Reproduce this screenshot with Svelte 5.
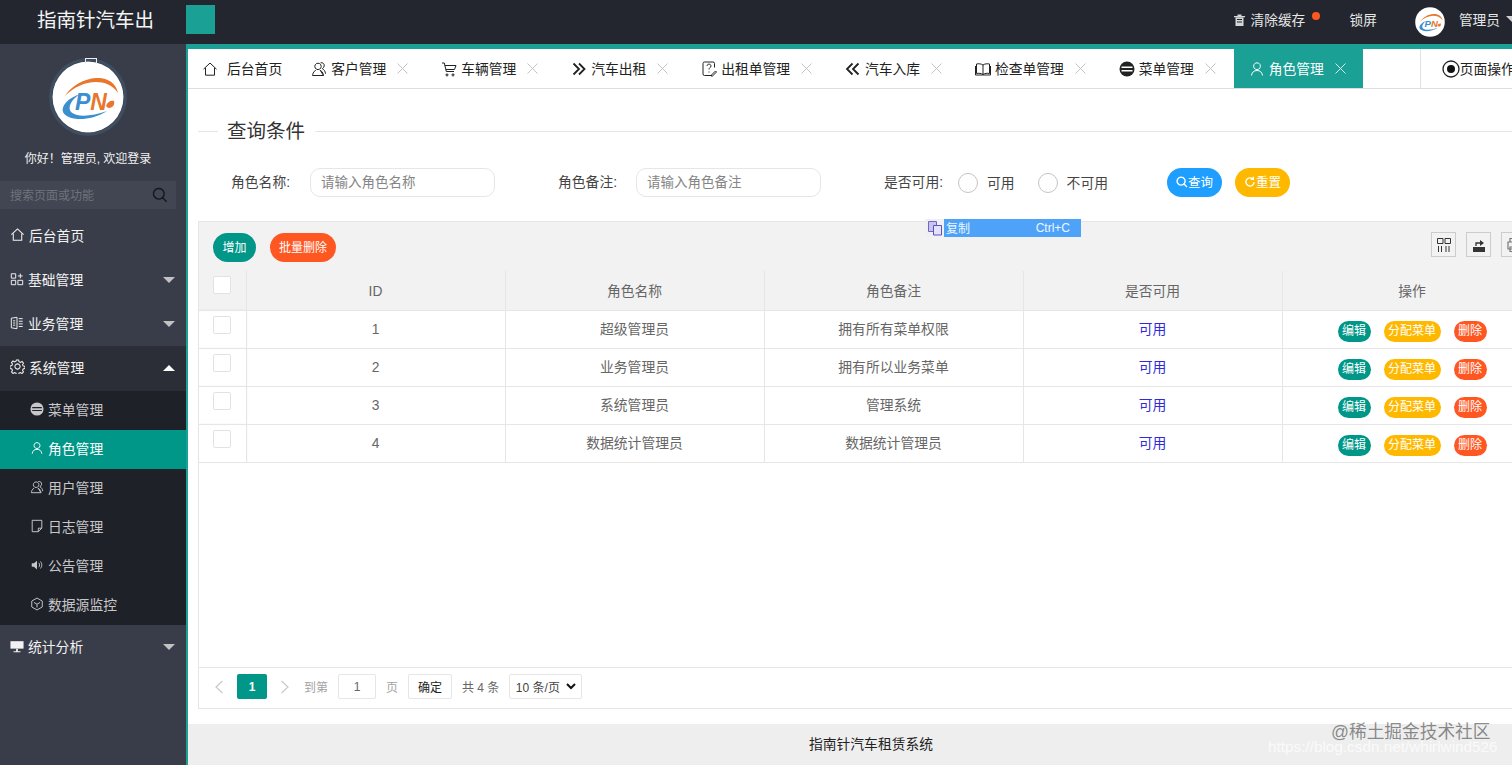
<script>
  const ic = {
    home: ['M1.5 8.2 8 2l6.500 6.200', 'M3.500 7v7.200h9V7'],
    user: ['M8 1.800a3.400 3.400 0 1 0 .01 0z', 'M2.500 14.500c.4-3.400 2.600-5 5.500-5s5.100 1.600 5.500 5'],
    users: ['M7 2.200a3.200 3.200 0 1 0 .01 0z', 'M1.500 14.500c.2-1 .6-4 3.300-5.200M9.200 9.300c2.700 1.200 3.100 4.200 3.300 5.200z M1.500 14.500h11', 'M9.500 1.800c2.500-.6 4 1.200 3.700 3.200-.2 1.300-.9 2.200-1.900 2.700 1.700.8 3 2.500 3.200 5'],
    cart: ['M1 2h2.300l2 8.500h7.700', 'M3.800 4.500H15l-1.500 4H5', 'M6 13a1 1 0 1 0 .01 0zM12 13a1 1 0 1 0 .01 0z'],
    right: ['M2.500 2.500 8 8l-5.500 5.500', 'M8 2.500 13.500 8 8 13.500'],
    left: ['M7.500 2.500 2 8l5.500 5.500', 'M13.500 2.500 8 8l5.500 5.500'],
    quest: ['M11 14.500H3.500a1.500 1.500 0 0 1-1.500-1.500V2.500A1.500 1.500 0 0 1 3.500 1H12a1.500 1.500 0 0 1 1.500 1.500v4', 'M6 5c0-2.500 4-2.500 4 0 0 1.500-2 1.500-2 3.500M8 10.500v1', 'M10 14.500l4.500-4.500 1 1-4.500 4.500z'],
    book: ['M8 4C6.500 2.800 3.500 2.500 1.500 3v9.500c2-.5 5-.2 6.500 1 1.500-1.200 4.500-1.500 6.500-1V3C12.500 2.500 9.500 2.800 8 4zM8 4v9.500', 'M.5 5v9h15V5'],
    grid: ['M1.500 2h5v5h-5zM1.500 9.500h5v5h-5zM9 9.500h5.500v5H9z', 'M11.800 1.800v5.400M9 4.500h5.500'],
    biz: ['M1.500 2.500 8 1.500v13l-6.500-1z', 'M3.500 5.500H6M3.500 8H6M3.500 10.500H6', 'M10 3h4.500M10 6h4.500M10 9h4.500M10 12h4.500'],
    gear: ['M8 5.200a2.800 2.800 0 1 0 .01 0z', 'M6.800 1h2.400l.4 1.900 1.500.7 1.700-1 1.600 1.700-1 1.600.6 1.500 2 .5v2.300l-2 .5-.6 1.500 1 1.600-1.600 1.700-1.700-1-1.500.6-.4 1.900H6.800l-.4-1.900-1.500-.6-1.700 1-1.600-1.700 1-1.600-.6-1.500-2-.5V7.400l2-.5.6-1.500-1-1.600 1.600-1.700 1.700 1 1.500-.7z'],
    note: ['M2.500 1.500h11v9l-4 4h-7zM13.500 10.500h-4v4'],
    cube: ['M8 1.200 14 4.600v6.800l-6 3.400-6-3.400V4.600z', 'M4.500 6.200 8 8.300l3.500-2.100M8 8.300v3.700'],
    search: ['M6.800 1.500a5.300 5.300 0 1 0 .01 0z', 'M10.700 10.700l4 4'],
    refresh: ['M13.500 8a5.500 5.500 0 1 1-1.600-3.900', 'M12.500 1v3.500H9']
  };
  const tabs = [
    ['users', '客户管理', 0], ['cart', '车辆管理', 0], ['right', '汽车出租', 1], ['quest', '出租单管理', 0],
    ['left', '汽车入库', 1], ['book', '检查单管理', 0], ['menu', '菜单管理', 0], ['user', '角色管理', 0]
  ];
  const subs = [['menu', '菜单管理'], ['user', '角色管理'], ['users', '用户管理'], ['note', '日志管理'], ['speaker', '公告管理'], ['cube', '数据源监控']];
  const rows = [
    [1, '超级管理员', '拥有所有菜单权限'],
    [2, '业务管理员', '拥有所以业务菜单'],
    [3, '系统管理员', '管理系统'],
    [4, '数据统计管理员', '数据统计管理员']
  ];
</script>

{#snippet icon(name, size = 16, w = 1.1)}
  {#if name === 'menu'}
    <svg class="ico" width={size} height={size} viewBox="0 0 16 16"><circle cx="8" cy="8" r="7.500" fill="currentColor" /><path d="M2.500 6.300h11M2.500 9.700h11" stroke="var(--cut, #fff)" stroke-width="1.400" /></svg>
  {:else if name === 'speaker'}
    <svg class="ico" width={size} height={size} viewBox="0 0 16 16"><path d="M2 6h2.500L8 3v10L4.500 10H2z" fill="currentColor" /><path d="M10 5.500c1.300 1.500 1.300 3.500 0 5M12 4c2 2.300 2 5.700 0 8" fill="none" stroke="currentColor" /></svg>
  {:else}
    <svg class="ico" width={size} height={size} viewBox="0 0 16 16" fill="none" stroke="currentColor" stroke-width={w}>
      {#each ic[name] as d}<path {d} />{/each}
    </svg>
  {/if}
{/snippet}

{#snippet logo(size)}
  <svg class="logo" width={size} height={size} viewBox="0 0 72 72">
    <circle cx="36" cy="36" r="35.500" fill="#fff" />
    <path d="M13 35C20 24 32 18 44 17c10-1 20 4 22 15C61 24 52 21 44 21 33 21 22 26 13 35z" fill="#e8762d" />
    <path d="M28 33C16 37 9 45 11 51c3 8 25 11 44-1-16 6-31 6-36 1-4-5 1-13 9-18z" fill="#3a8fd0" />
    <text x="23" y="49" class="lg"><tspan class="lp">P</tspan><tspan class="ln">N</tspan></text>
    <path d="M54 45c1-4 5-6 8-5 1 3-1 7-5 7-1 0-2-1-3-2z" fill="#e8762d" />
  </svg>
{/snippet}

<div class="page">
  <header class="top">
    <div class="brand">指南针汽车出</div>
    <div class="square"></div>
    <div class="top-right">
      <span class="trash">
        <svg width="11" height="12" viewBox="0 0 11 12"><path d="M0 2h11v1.200H0zM3.500.5h4V2h-4zM1.500 3.500h8V12h-8z" fill="#d5d6d8" /><path d="M3 5.500h5M3 8h5" stroke="#23262e" /></svg>
      </span>
      <span class="clear">清除缓存</span>
      <span class="dot"></span>
      <span class="lock">锁屏</span>
      <span class="mini">{@render logo(30)}</span>
      <span class="admin">管理员</span>
      <span class="caret"></span>
    </div>
  </header>

  <div class="body">
    <aside class="side">
      <div class="avatar-wrap">
        <span class="broken"></span>
        {@render logo(72)}
      </div>
      <div class="hello">你好！管理员, 欢迎登录</div>
      <div class="search">
        <span class="ph">搜索页面或功能</span>
        <span class="search-ic">{@render icon('search', 16, 1.400)}</span>
      </div>
      <nav>
        <div class="mi">{@render icon('home', 15)}<span>后台首页</span></div>
        <div class="mi">{@render icon('grid', 14)}<span>基础管理</span><i class="tri"></i></div>
        <div class="mi">{@render icon('biz', 14)}<span>业务管理</span><i class="tri"></i></div>
        <div class="mi open">{@render icon('gear', 15)}<span>系统管理</span><i class="tri up"></i></div>
        <div class="subs">
          {#each subs as [n, t]}
            <div class="si" class:on={t === '角色管理'}>{@render icon(n, 14)}<span>{t}</span></div>
          {/each}
        </div>
        <div class="mi">
          <svg class="ico" width="14" height="14" viewBox="0 0 16 16"><path d="M.5 2.500h15v8.500H.5z" fill="#f2f2f2" /><path d="M7 11h2v3h3v1H4v-1h3z" fill="#f2f2f2" /></svg>
          <span>统计分析</span><i class="tri"></i>
        </div>
      </nav>
    </aside>

    <main class="main">
      <div class="tabs">
        <div class="tab first">{@render icon('home', 16, 1)}<span class="t">后台首页</span></div>
        {#each tabs as [n, t, bold]}
          <div class="tab" class:act={t === '角色管理'}>
            {@render icon(n, 16, bold ? 1.800 : 1)}<span class="t">{t}</span>
            <svg class="x" width="11" height="11" viewBox="0 0 11 11"><path d="M.5.500l10 10M10.500.500l-10 10" stroke="currentColor" fill="none" /></svg>
          </div>
        {/each}
        <div class="tab-ops">
          <svg width="18" height="18" viewBox="0 0 18 18"><circle cx="9" cy="9" r="8" fill="none" stroke="#222" stroke-width="1.300" /><circle cx="9" cy="9" r="4" fill="#111" /></svg>
          <span class="t0">页面操作</span>
        </div>
      </div>

      <div class="content">
        <div class="legend"><i></i><span>查询条件</span><b></b></div>
        <div class="form">
          <label class="l1" for="f1">角色名称:</label>
          <input id="f1" class="in" placeholder="请输入角色名称" />
          <label class="l2" for="f2">角色备注:</label>
          <input id="f2" class="in" placeholder="请输入角色备注" />
          <span class="l3">是否可用:</span>
          <span class="radio r1"></span><span class="rt">可用</span>
          <span class="radio r2"></span><span class="rt">不可用</span>
          <button class="btn blue q">
            <svg width="12" height="12" viewBox="0 0 16 16" fill="none" stroke="#fff" stroke-width="1.800"><path d="M6.800 1.500a5.300 5.300 0 1 0 .01 0zM10.700 10.700l4 4" /></svg>查询
          </button>
          <button class="btn yellow">
            <svg width="12" height="12" viewBox="0 0 16 16" fill="none" stroke="#fff" stroke-width="1.800"><path d="M13.500 8a5.500 5.500 0 1 1-1.600-3.900M12.500 1v3.500H9" /></svg>重置
          </button>
        </div>

        <section class="grid">
          <div class="toolbar">
            <button class="btn teal add">增加</button>
            <button class="btn orange del">批量删除</button>
            <div class="tools">
              <span class="tool">
                <svg width="16" height="16" viewBox="0 0 16 16" fill="none" stroke="#333"><path d="M1.500 1.500h5.500v5H1.500zM9 1.500h5.500v5H9zM2.500 9v6M5.500 9v6M10 9v6M13 9v6" /></svg>
              </span>
              <span class="tool">
                <svg width="16" height="16" viewBox="0 0 16 16"><path d="M2 10h12v5H2z" fill="#333" /><path d="M5 9V6h5" fill="none" stroke="#333" stroke-width="1.300" /><path d="M9 3l4 3-4 3z" fill="#333" /></svg>
              </span>
              <span class="tool">
                <svg width="16" height="16" viewBox="0 0 16 16" fill="none" stroke="#777" stroke-width="1.200"><path d="M4 5V1.500h8V5M2 5h12v7H2zM4 10h8v4.500H4z" /></svg>
              </span>
            </div>
          </div>
          <table>
            <colgroup><col class="c0" /><col class="cw" /><col class="cw" /><col class="cw" /><col class="cw" /><col class="cl" /></colgroup>
            <thead>
              <tr>
                <th class="chk"><span class="box head"></span></th>
                <th class="idc">ID</th><th>角色名称</th><th>角色备注</th><th>是否可用</th><th>操作</th>
              </tr>
            </thead>
            <tbody>
              {#each rows as [id, name, note]}
                <tr>
                  <td class="chk"><span class="box"></span></td>
                  <td class="idc">{id}</td><td>{name}</td><td>{note}</td>
                  <td class="ok">可用</td>
                  <td class="opc">
                    <div class="ops">
                      <span class="pill teal">编辑</span>
                      <span class="pill yellow">分配菜单</span>
                      <span class="pill orange">删除</span>
                    </div>
                  </td>
                </tr>
              {/each}
            </tbody>
          </table>
          <div class="spacer"></div>
          <div class="pager">
            <svg class="chev" width="10" height="14" viewBox="0 0 10 14"><path d="M8.500 1 2 7l6.500 6" fill="none" stroke="#c9c9c9" stroke-width="1.200" /></svg>
            <span class="cur">1</span>
            <svg class="chev n" width="10" height="14" viewBox="0 0 10 14"><path d="M1.500 1 8 7l-6.500 6" fill="none" stroke="#c9c9c9" stroke-width="1.200" /></svg>
            <span class="muted to">到第</span>
            <span class="pbox num">1</span>
            <span class="muted pg">页</span>
            <span class="pbox ok-b">确定</span>
            <span class="total">共 4 条</span>
            <span class="pbox sel">10 条/页
              <svg width="10" height="7" viewBox="0 0 10 7"><path d="M1 1l4 4 4-4" fill="none" stroke="#111" stroke-width="2" /></svg>
            </span>
          </div>
        </section>
      </div>

      <footer class="foot">指南针汽车租赁系统</footer>
    </main>
  </div>

  <div class="ctx">
    <span class="ctx-ic">
      <svg width="16" height="16" viewBox="0 0 16 16"><path d="M1.500 1.500h8v10h-8z" fill="#c9c4ee" stroke="#6f67c8" /><path d="M6.500 5.500h8v9.500h-8z" fill="#e4e2f8" stroke="#5a52bd" /></svg>
    </span>
    <span class="ctx-b"><span class="cp">复制</span><span>Ctrl+C</span></span>
  </div>
  <div class="wm1">@稀土掘金技术社区</div>
  <div class="wm2">https://blog.csdn.net/whirlwind526</div>
</div>

<style>
  :global(body) { margin: 0; }
  .page {
    position: relative; width: 1512px; height: 765px; overflow: hidden; background: #fff;
    font-family: "Liberation Sans", "Noto Sans CJK SC", sans-serif; font-size: 13.800px; color: #333;
    display: flex; flex-direction: column;
  }
  .ico { flex: none; display: block; }

  .top { height: 44px; flex: none; background: #23262e; display: flex; color: #fff; }
  .brand { width: 149px; padding-left: 37px; font-size: 19.500px; line-height: 40px; white-space: nowrap; color: #f4f4f4; }
  .square { width: 29px; height: 29px; margin-top: 5px; background: #1aa094; }
  .top-right { margin-left: auto; display: flex; align-items: center; font-size: 13.700px; color: #e6e6e6; padding-bottom: 6px; }
  .trash { display: flex; margin-right: 6px; margin-top: 1px; }
  .clear { width: 55px; white-space: nowrap; }
  .dot { width: 8px; height: 8px; border-radius: 50%; background: #ff5722; margin: -7px 0 0 6px; }
  .lock { margin-left: 30px; }
  .mini { display: flex; margin-left: 38px; margin-top: 5px; }
  .admin { margin-left: 14px; white-space: nowrap; }
  .caret { width: 0; height: 0; border: 6px solid transparent; border-top-color: #cfd0d2; border-bottom: 0; margin-left: 6px; margin-right: -6px; }

  .body { flex: 1; display: flex; min-height: 0; }

  .side { width: 186px; flex: none; background: #393d49; color: #f0f0f0; }
  .avatar-wrap { position: relative; width: 72px; height: 72px; margin: 17px auto 0 52px; border-radius: 50%; box-shadow: 0 0 0 3px #3f4e60; }
  .avatar-wrap :global(.logo) { display: block; }
  .broken { position: absolute; top: -3px; left: 33px; width: 10px; height: 5px; border: 1px solid #eee; border-bottom: 0; z-index: 1; }
  .hello { margin-top: 17px; text-align: center; font-size: 12px; line-height: 18px; width: 176px; white-space: nowrap; color: #f2f2f2; }
  .search {
    margin-top: 13px; width: 176px; height: 28px; background: #424652; color: #6e727c; font-size: 12px;
    display: flex; align-items: center; justify-content: space-between; padding: 0 8px 0 10px; box-sizing: border-box;
  }
  .ph { padding-bottom: 2px; }
  .search-ic { color: #15171c; display: flex; }
  nav { margin-top: 5px; }
  .mi { height: 44px; display: flex; align-items: center; padding-left: 10px; gap: 4px; position: relative; color: #f2f2f2; box-sizing: border-box; padding-bottom: 3px; }
  .mi.open { background: #2b2e37; height: 45px; padding-bottom: 4px; }
  .tri { margin-left: auto; margin-right: 11px; margin-top: 3px; width: 0; height: 0; border: 6px solid transparent; border-top: 6px solid #c2c2c2; border-bottom: 0; }
  .tri.up { border-top: 0; border-bottom: 6px solid #fff; }
  .subs { background: #1f2128; }
  .si { height: 39px; display: flex; align-items: center; padding-left: 30px; gap: 4px; color: #c7c7c9; box-sizing: border-box; padding-bottom: 3px; }
  .si.on { background: #009688; color: #fff; }
  .si { --cut: #1f2128; }

  .main { flex: 1; min-width: 0; display: flex; flex-direction: column; border-left: 2px solid #1aa094; border-top: 5px solid #1aa094; overflow: hidden; }

  .tabs { height: 39px; flex: none; display: flex; border-bottom: 1px solid #dedede; position: relative; }
  .tab { height: 39px; display: flex; align-items: center; padding-left: 15px; padding-right: 17.800px; color: #222; --cut: #fff; flex: none; }
  .tab.first { padding-left: 14px; padding-right: 14px; }
  .t { margin-left: 4px; white-space: nowrap; padding-bottom: 2px; }
  .t0 { padding-bottom: 2px; }
  .first .t { margin-left: 9px; }
  .x { margin-left: 11px; color: #c4c4c4; flex: none; }
  .act { background: #1aa094; color: #fff; width: 129px; box-sizing: border-box; }
  .act .x { color: #d6efec; }
  .tab-ops { margin-left: 57px; border-left: 1px solid #e2e2e2; display: flex; align-items: center; padding-left: 21px; white-space: nowrap; color: #222; flex: none; }

  .content { flex: 1; min-height: 0; padding: 27px 0 0 10px; display: flex; flex-direction: column; }
  .legend { height: 30px; display: flex; align-items: center; font-size: 19.500px; color: #333; flex: none; }
  .legend i { width: 20px; height: 1px; background: #e6e6e6; }
  .legend span { padding: 0 10px 3px 9px; white-space: nowrap; }
  .legend b { flex: 1; height: 1px; background: #e6e6e6; }

  .form { display: flex; align-items: center; margin-top: 22px; height: 29px; flex: none; }
  .form label, .l3 { white-space: nowrap; color: #444; padding-bottom: 3px; }
  .l1 { margin-left: 33px; width: 79px; }
  .l2 { margin-left: 63px; width: 78px; }
  .l3 { margin-left: 63px; width: 64px; }
  .in {
    width: 185px; height: 29px; box-sizing: border-box; border: 1px solid #e6e6e6; border-radius: 10px;
    padding: 0 10px; font: inherit; font-size: 13.500px; outline: none; color: #333; background: #fff;
  }
  .in::placeholder { color: #858585; opacity: 1; }
  .radio { width: 20px; height: 20px; border-radius: 50%; border: 1.500px solid #c4c4c4; box-sizing: border-box; flex: none; margin-top: 1px; }
  .r1 { margin-left: 10px; }
  .r2 { margin-left: 23px; }
  .rt { margin-left: 9px; white-space: nowrap; color: #444; padding-bottom: 1px; }
  .btn {
    height: 29px; border: 0; border-radius: 15px; color: #fff; font: inherit; font-size: 12px; padding: 0 0 2px;
    display: inline-flex; align-items: center; justify-content: center; flex: none;
  }
  .q { margin-left: 59px; }
  .form .btn { width: 55px; font-size: 12.500px; }
  .form .yellow { margin-left: 13px; }
  .blue { background: #1e9fff; }
  .yellow { background: #ffb800; }
  .teal { background: #009688; }
  .orange { background: #ff5722; }

  .grid { margin-top: 24px; flex: 1; min-height: 0; width: 1344px; border: 1px solid #e6e6e6; box-sizing: border-box; display: flex; flex-direction: column; }
  .toolbar { height: 49px; flex: none; background: #f2f2f2; display: flex; align-items: center; padding-left: 14px; position: relative; box-sizing: border-box; }
  .add { width: 43px; margin-top: 2px; }
  .del { width: 66px; margin-left: 14px; margin-top: 2px; }
  .tools { margin-left: auto; margin-right: 15px; display: flex; gap: 10px; align-self: flex-start; margin-top: 10px; }
  .tool { width: 25px; height: 25px; box-sizing: border-box; border: 1px solid #ccc; display: flex; align-items: center; justify-content: center; }

  table { width: 1342px; border-collapse: collapse; table-layout: fixed; flex: none; }
  .c0 { width: 47px; }
  .cw { width: 259px; }
  .cl { width: 260px; }
  th, td { height: 38px; padding: 0 0 2px; text-align: center; font-weight: 400; color: #666; border: 1px solid #e6e6e6; border-width: 0 1px 1px 0; box-sizing: border-box; }
  th { height: 39px; background: #f2f2f2; padding: 0; }
  td.idc { padding: 1px 0 0; }
  th.idc { padding: 2px 0 0; }
  .chk, th.chk { vertical-align: top; padding: 5px 0 0 14px; text-align: left; box-shadow: 1px 0 2px rgba(0,0,0,.06); }
  .box { display: block; width: 18px; height: 18px; box-sizing: border-box; border: 1px solid #e2e2e2; border-radius: 2px; background: #fff; }
  td.ok { color: #2f2bdc; }
  .opc { vertical-align: middle; padding: 4px 0 0; }
  .ops { display: flex; align-items: center; padding-left: 55px; gap: 13px; }
  .pill { height: 21px; line-height: 20px; border-radius: 11px; color: #fff; font-size: 12px; padding: 0 4.500px; white-space: nowrap; }

  .spacer { flex: 1; }
  .pager { height: 41px; flex: none; box-sizing: border-box; border-top: 1px solid #e6e6e6; display: flex; align-items: center; font-size: 12px; color: #666; padding: 0 0 3px 15px; }
  .cur { width: 30px; height: 25px; background: #009688; color: #fff; border-radius: 2px; display: flex; align-items: center; justify-content: center; font-weight: 700; margin-left: 13px; }
  .chev { flex: none; }
  .chev.n { margin-left: 13px; }
  .muted { color: #a3a3a3; white-space: nowrap; }
  .to { margin-left: 14px; }
  .pbox { height: 25px; box-sizing: border-box; border: 1px solid #e6e6e6; border-radius: 2px; display: flex; align-items: center; justify-content: center; background: #fff; white-space: nowrap; }
  .num { width: 38px; margin-left: 10px; }
  .pg { margin-left: 10px; }
  .ok-b { width: 44px; margin-left: 10px; color: #222; }
  .total { margin-left: 10px; white-space: nowrap; }
  .sel { width: 73px; margin-left: 10px; gap: 6px; color: #444; }

  .foot { margin-top: 15px; height: 41px; flex: none; background: #eee; text-align: center; line-height: 41px; font-size: 13.800px; color: #222; padding-left: 42px; }
  .lg { font-family: "Liberation Sans", sans-serif; font-style: italic; font-weight: 700; font-size: 23px; }
  .lp { fill: #3a8fd0; }
  .ln { fill: #e8762d; }

  .ctx { position: absolute; left: 925px; top: 219px; height: 18px; display: flex; font-size: 12px; }
  .ctx-ic { width: 19px; background: #f0f0f4; display: flex; align-items: center; justify-content: center; }
  .ctx-b { width: 137px; background: #4ea3f8; color: #eef6ff; display: flex; justify-content: space-between; align-items: center; padding: 0 11px 0 2px; box-sizing: border-box; }
  .cp { padding-bottom: 2px; }
  .wm1 { position: absolute; left: 1331px; top: 724px; font-size: 17.700px; color: rgba(95,95,95,.72); white-space: nowrap; line-height: 16px; }
  .wm2 { position: absolute; left: 1268px; top: 740px; font-size: 15.300px; color: rgba(255,255,255,.75); white-space: nowrap; line-height: 14px; }
</style>
